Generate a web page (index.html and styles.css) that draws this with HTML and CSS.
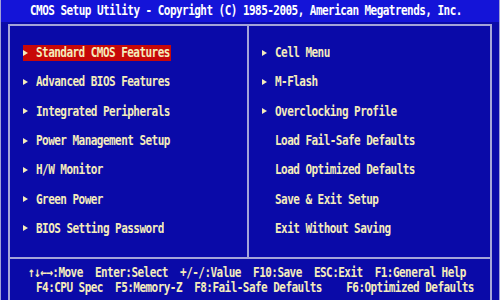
FILE: index.html
```html
<!DOCTYPE html>
<html>
<head>
<meta charset="utf-8">
<link rel="stylesheet" href="styles.css">
</head>
<body>
<div class="screen">
  <div class="header"><span class="tall">CMOS Setup Utility - Copyright (C) 1985-2005, American Megatrends, Inc.</span></div>
  <div class="frame">
    <div class="menus">
      <ul class="col">
        <li class="item sel"><span class="hl"><span class="tri"></span><span class="lbl tall">Standard CMOS Features</span></span></li>
        <li class="item"><span class="tri"></span><span class="lbl tall">Advanced BIOS Features</span></li>
        <li class="item"><span class="tri"></span><span class="lbl tall">Integrated Peripherals</span></li>
        <li class="item"><span class="tri"></span><span class="lbl tall">Power Management Setup</span></li>
        <li class="item"><span class="tri"></span><span class="lbl tall">H/W Monitor</span></li>
        <li class="item"><span class="tri"></span><span class="lbl tall">Green Power</span></li>
        <li class="item"><span class="tri"></span><span class="lbl tall">BIOS Setting Password</span></li>
      </ul>
      <ul class="col right">
        <li class="item"><span class="tri"></span><span class="lbl tall">Cell Menu</span></li>
        <li class="item"><span class="tri"></span><span class="lbl tall">M-Flash</span></li>
        <li class="item"><span class="tri"></span><span class="lbl tall">Overclocking Profile</span></li>
        <li class="item"><span class="notri"></span><span class="lbl tall">Load Fail-Safe Defaults</span></li>
        <li class="item"><span class="notri"></span><span class="lbl tall">Load Optimized Defaults</span></li>
        <li class="item"><span class="notri"></span><span class="lbl tall">Save &amp; Exit Setup</span></li>
        <li class="item"><span class="notri"></span><span class="lbl tall">Exit Without Saving</span></li>
      </ul>
    </div>
    <div class="footer">
      <div class="fl one"><span class="tall">↑↓←→:Move  Enter:Select  +/-/:Value  F10:Save  ESC:Exit  F1:General Help</span></div>
      <div class="fl two"><span class="tall">F4:CPU Spec  F5:Memory-Z  F8:Fail-Safe Defaults    F6:Optimized Defaults</span></div>
    </div>
  </div>
</div>
</body>
</html>
```
FILE: styles.css
```css
html, body {
  margin: 0;
  padding: 0;
  background: #0a0aa8;
}
.screen {
  width: 500px;
  height: 300px;
  box-sizing: border-box;
  border-left: 1px solid #a0a0d8;
  border-right: 1px solid #a0a0d8;
  background: #0a0aa8;
  font-family: "DejaVu Sans Mono", "Liberation Mono", monospace;
  font-weight: bold;
  font-size: 11px;
  letter-spacing: -0.54px;
  color: #f4ecbc;
  overflow: hidden;
}
.tall {
  display: inline-block;
  transform: scaleY(1.25);
  white-space: pre;
}
.header {
  height: 22px;
  line-height: 22px;
  background: #1414d8;
  color: #ffffff;
  padding-left: 29px;
  white-space: pre;
}
.frame {
  margin: 2px 7px 0 7px;
  border: 2px solid #a4a4d8;
  border-bottom: none;
  height: 276px;
  box-sizing: border-box;
  display: flex;
  flex-direction: column;
}
.menus {
  display: flex;
  height: 231px;
  border-bottom: 2px solid #a4a4d8;
}
.col {
  list-style: none;
  margin: 0;
  padding: 12px 0 0 0;
  width: 237px;
  border-right: 2px solid #a4a4d8;
  display: grid;
  grid-template-rows: repeat(7, 29.3px);
  align-content: start;
}
.col.right {
  border-right: none;
  flex: 1;
}
.item {
  display: flex;
  align-items: center;
  padding-left: 13px;
}
.hl {
  display: flex;
  align-items: center;
  background: #c80808;
  height: 16px;
  padding-right: 1px;
}
.tri {
  width: 0;
  height: 0;
  border-top: 3.5px solid transparent;
  border-bottom: 3.5px solid transparent;
  border-left: 5px solid #f4ecbc;
  margin-right: 8px;
}
.notri {
  width: 13px;
}
.lbl {
  white-space: pre;
}
.footer {
  flex: 1;
  padding-top: 6px;
}
.fl {
  white-space: pre;
  height: 15px;
  line-height: 15px;
}
.fl.one { padding-left: 18px; }
.fl.two { padding-left: 26px; }
```
